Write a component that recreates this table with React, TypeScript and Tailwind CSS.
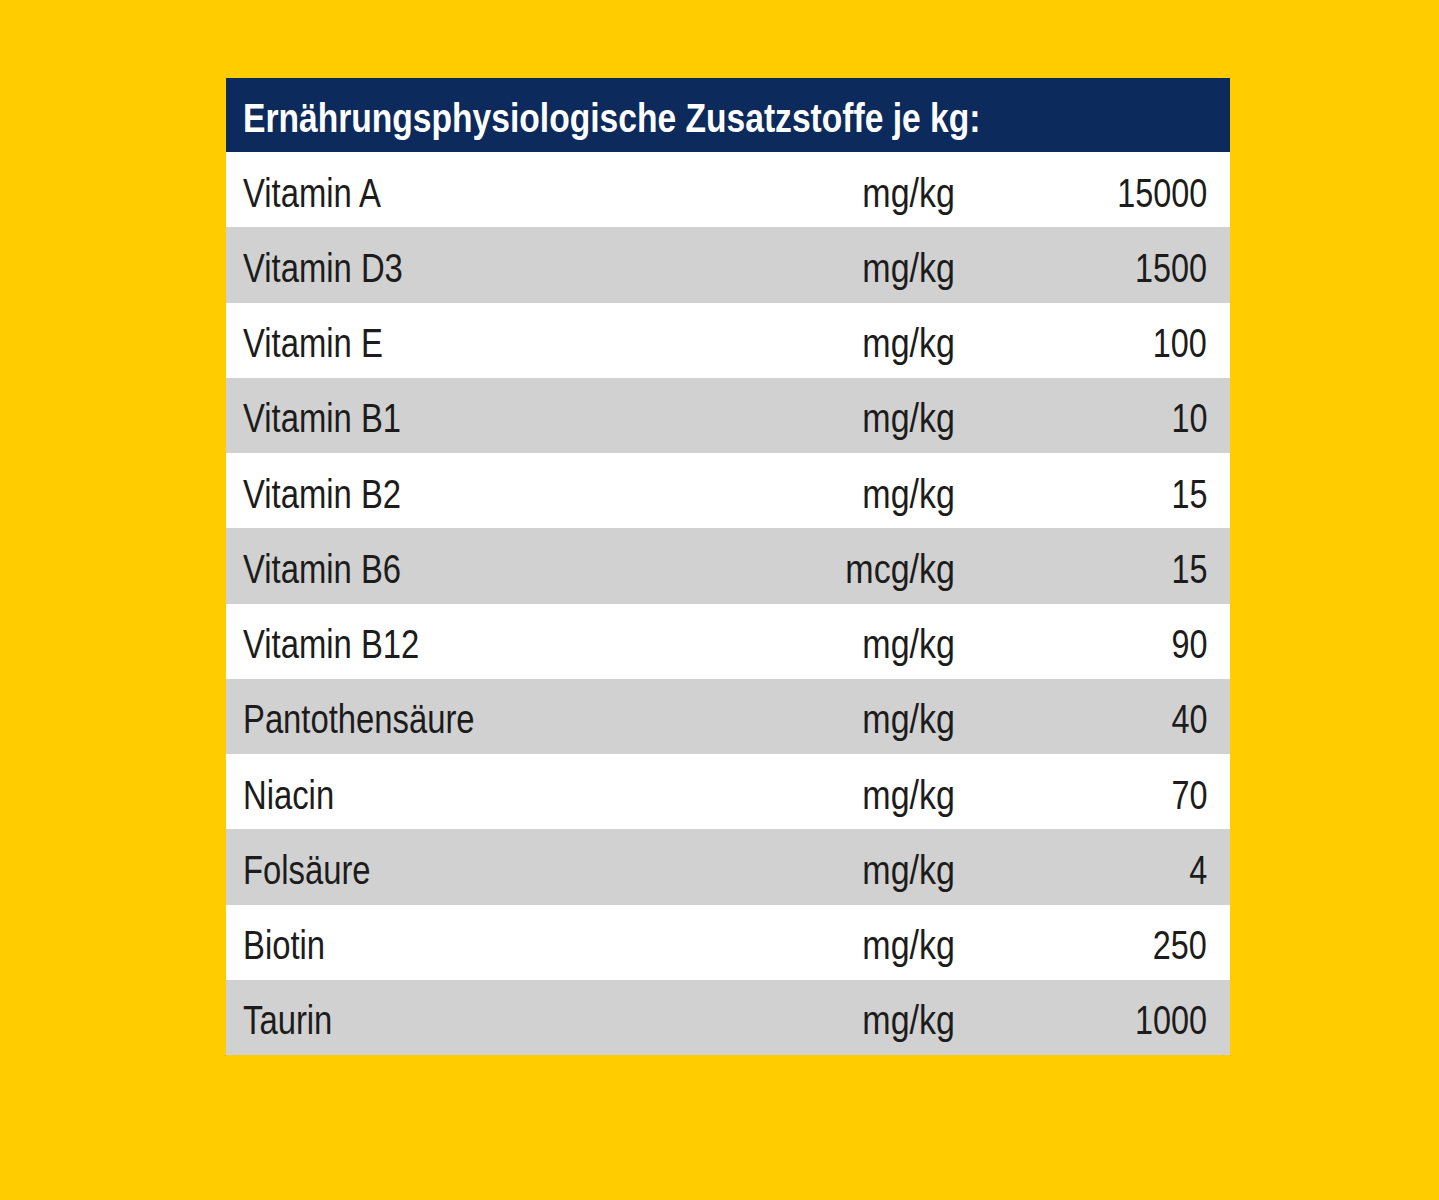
const rows: { name: string; unit: string; value: string }[] = [
  { name: "Vitamin A", unit: "mg/kg", value: "15000" },
  { name: "Vitamin D3", unit: "mg/kg", value: "1500" },
  { name: "Vitamin E", unit: "mg/kg", value: "100" },
  { name: "Vitamin B1", unit: "mg/kg", value: "10" },
  { name: "Vitamin B2", unit: "mg/kg", value: "15" },
  { name: "Vitamin B6", unit: "mcg/kg", value: "15" },
  { name: "Vitamin B12", unit: "mg/kg", value: "90" },
  { name: "Pantothensäure", unit: "mg/kg", value: "40" },
  { name: "Niacin", unit: "mg/kg", value: "70" },
  { name: "Folsäure", unit: "mg/kg", value: "4" },
  { name: "Biotin", unit: "mg/kg", value: "250" },
  { name: "Taurin", unit: "mg/kg", value: "1000" },
]

export default function App() {
  return (
    <div className="min-h-[1200px] w-full bg-[#ffcc00] pt-[78px] pl-[226px] font-['Liberation_Sans',Arial,sans-serif]">
      <div className="w-[1004px]">
        <div className="flex h-[74px] items-center bg-[#0c2a5c] px-[17px] pt-[5px]">
          <span className="inline-block origin-left scale-x-[0.84] whitespace-nowrap text-[40px] font-bold leading-none text-white">
            Ernährungsphysiologische Zusatzstoffe je kg:
          </span>
        </div>
        {rows.map((row, i) => (
          <div
            key={row.name}
            className={`flex h-[75.25px] items-center pl-[17px] pr-[23px] pt-[6px] text-[40px] leading-none text-[#1c1c1c] ${
              i % 2 === 0 ? "bg-white" : "bg-[#d1d1d1]"
            }`}
          >
            <div className="flex-1">
              <span className="inline-block origin-left scale-x-[0.82] whitespace-nowrap">{row.name}</span>
            </div>
            <div className="text-right">
              <span className="inline-block origin-right scale-x-[0.85] whitespace-nowrap">{row.unit}</span>
            </div>
            <div className="w-[252px] text-right">
              <span className="inline-block origin-right scale-x-[0.81] whitespace-nowrap">{row.value}</span>
            </div>
          </div>
        ))}
      </div>
    </div>
  )
}
